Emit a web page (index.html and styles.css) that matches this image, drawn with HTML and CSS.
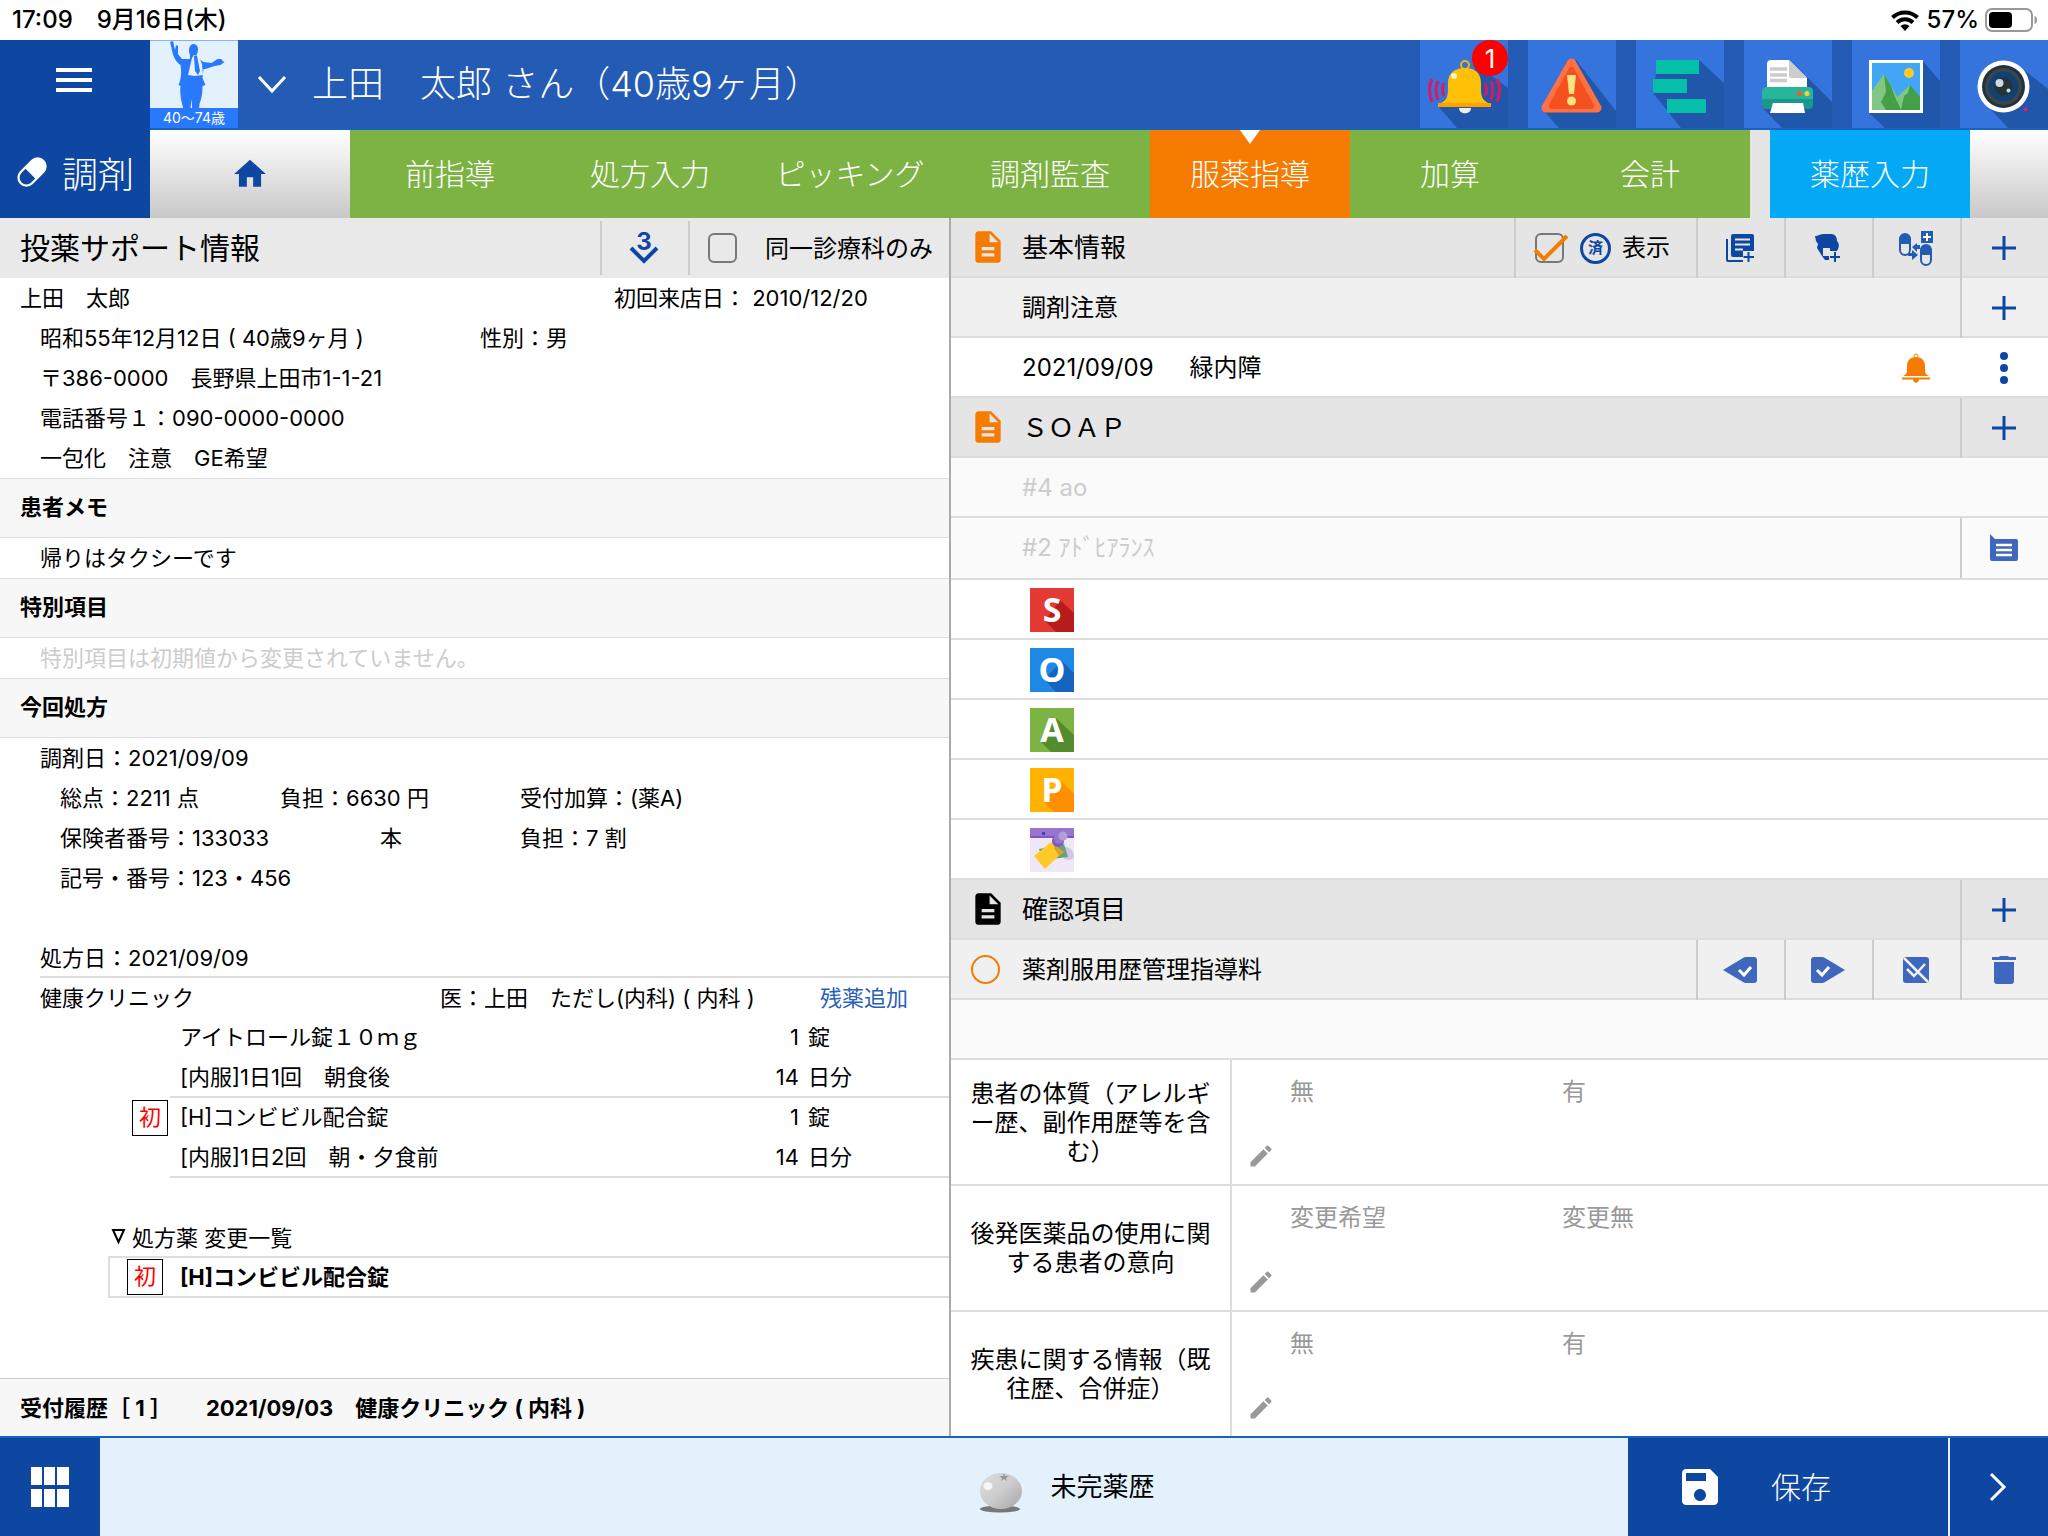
FILE: index.html
```html
<!DOCTYPE html>
<html lang="ja">
<head>
    <meta charset="UTF-8">
    <meta name="viewport" content="width=device-width, initial-scale=1.0">
    <title>服薬指導</title>
    <link rel="stylesheet" href="styles.css">
</head>
<body>
<svg class="symbols" width="0" height="0">
    <symbol id="plus" viewBox="0 0 24 24"><path d="M12 0v24M0 12h24" stroke="#0d47a1" stroke-width="3"/></symbol>
    <symbol id="doc" viewBox="0 0 24 24"><path d="M14 2H6c-1.100 0-2 .9-2 2v16c0 1.100.9 2 2 2h12c1.100 0 2-.9 2-2V8l-6-6zm2 16H8v-2h8v2zm0-4H8v-2h8v2zm-3-5V3.500L18.500 9H13z"/></symbol>
    <symbol id="pencil" viewBox="0 0 24 24"><path d="M3 17.250V21h3.750L17.810 9.940l-3.750-3.750L3 17.250zM20.710 7.040c.39-.39.39-1.020 0-1.410l-2.340-2.340c-.39-.39-1.020-.39-1.410 0l-1.830 1.830 3.750 3.750 1.830-1.830z"/></symbol>
</svg>

<div class="status-bar">
    <span class="time">17:09</span>
    <span class="date">9月16日(木)</span>
    <svg class="wifi" width="28" height="22" viewBox="0 0 28 22">
        <path d="M1.500 8.500a18 18 0 0 1 25 0M6 13.500a11.500 11.500 0 0 1 16 0" fill="none" stroke="#000" stroke-width="4"/>
        <path d="M9.500 17a6.500 6.500 0 0 1 9 0L14 22z"/>
    </svg>
    <span class="battery-text">57%</span>
    <svg width="53" height="24" viewBox="0 0 53 24">
        <rect x="1" y="1" width="46" height="22" rx="6" fill="#fff" stroke="#999" stroke-width="2"/>
        <rect x="4" y="4" width="23" height="16" rx="4"/>
        <path d="M49.500 8c3.500 1 3.500 7 0 8z" fill="#999"/>
    </svg>
</div>

<header class="header">
    <div class="side">
        <button class="menu" type="button" aria-label="メニュー"><span></span><span></span><span></span></button>
        <div class="mode">
            <svg width="34" height="34" viewBox="0 0 30 30">
                <g transform="rotate(-45 15 15)">
                    <rect x="1" y="8" width="28" height="14" rx="7" fill="none" stroke="#fff" stroke-width="2"/>
                    <path d="M13 8h9a7 7 0 0 1 0 14h-9z" fill="#fff"/>
                </g>
            </svg>
            調剤
        </div>
    </div>
    <div class="top">
        <div class="patient-bar">
            <div class="avatar">
                <svg width="88" height="67" viewBox="0 0 88 67">
                    <path d="M20 1l3-1 2 9 1-5 2 1 0 8 4 5 8 0v-4c-2-4-1-11 3.500-11s6 6 3 11l1 3 6 4 8 1 6-4 4 0 1 2 2 1-4 3-6 1-9 3-2 0-1 9 3 7-3 1c0 8-1 12-3 18l-1 10 3 4h-6l-3-5-1-14-2 19-7 0 2-6c-3-9-5-18-4-26l-2-1c3-7 3-13 2-20-5-3-8-10-9-17z" fill="#2979ff"/>
                    <path d="M42 17l2-3 5 2 3 7 1 11-8 1-7-1z" fill="#e3f1fc"/>
                    <path d="M44 15h3l3 15-2 4-3-4z" fill="#2979ff"/>
                </svg>
                <span>40～74歳</span>
            </div>
            <button class="expand" type="button" aria-label="患者情報を開く">
                <svg width="30" height="18" viewBox="0 0 30 18"><path d="M2 1l13 14L28 1" fill="none" stroke="#fff" stroke-width="3"/></svg>
            </button>
            <h1>上田　太郎 さん（40歳9ヶ月）</h1>
            <div class="tools">
                <button type="button" aria-label="通知">
                    <svg width="88" height="88" viewBox="0 0 88 88">
                        <path d="M18 66L37 88H88V48L58 26z" fill="#2057ab"/>
                        <path d="M12 39q-5 10 0 23M18 41q-4 9 0 19M24 43q-3 7 0 13M77 39q5 10 0 23M71 41q4 9 0 19M65 43q3 7 0 13" fill="none" stroke="#d81b60" stroke-width="3"/>
                        <circle cx="45" cy="25" r="4" fill="none" stroke="#ffb300" stroke-width="2"/>
                        <path d="M18 64c7-2 10-6 10-14v-7c0-10 7-15 17-15s16 5 16 15v7c0 8 3 12 10 14z" fill="#ffc107"/>
                        <path d="M18 63h53v4H18z" fill="#ffa000"/>
                        <path d="M39 68h12c0 7-12 7-12 0z" fill="#eee"/>
                        <circle cx="34" cy="36" r="3" fill="#fff3c4"/>
                    </svg>
                    <span class="badge">1</span>
                </button>
                <button type="button" aria-label="警告">
                    <svg width="88" height="88" viewBox="0 0 88 88">
                        <path d="M15 70L31 88H88V71L48 20z" fill="#2057ab"/>
                        <path d="M43.500 23L18 68h51z" fill="#ff7043" stroke="#ff7043" stroke-width="9" stroke-linejoin="round"/>
                        <path d="M43.500 30L24 66h39z" fill="#f4511e" stroke="#f4511e" stroke-width="6" stroke-linejoin="round"/>
                        <path d="M39 35h9l-2 19h-5z" fill="#ffe082"/>
                        <circle cx="43.500" cy="61" r="4.500" fill="#ffe082"/>
                    </svg>
                </button>
                <button type="button" aria-label="タイムライン">
                    <svg width="88" height="88" viewBox="0 0 88 88">
                        <path d="M17 53L45 88H88V43L63 20 20 33z" fill="#2057ab"/>
                        <path d="M20 20h43v14H20zM17 39h34v14H17zM31 59h39v14H31z" fill="#05c0a8"/>
                    </svg>
                </button>
                <button type="button" aria-label="印刷">
                    <svg width="88" height="88" viewBox="0 0 88 88">
                        <path d="M18 67L38 88H88V62L63 37z" fill="#2057ab"/>
                        <rect x="18" y="50" width="51" height="19" rx="4" fill="#1b978b"/>
                        <path d="M23 24q0-4 4-4h18l18 18v12H23z" fill="#fff"/>
                        <path d="M45 20l18 18H47q-2 0-2-2z" fill="#ccc"/>
                        <path d="M26 29h17M26 35h17M26 40.500h17" stroke="#ccc" stroke-width="3.500"/>
                        <path d="M18 51q0-4 5-4h41q5 0 5 4v8H18z" fill="#26b69b"/>
                        <circle cx="55.500" cy="53.500" r="2.500" fill="#ff5722"/>
                        <circle cx="63" cy="53.500" r="2.500" fill="#fdcf30"/>
                        <path d="M29 63h30l2 10H26z" fill="#fff"/>
                    </svg>
                </button>
                <button type="button" aria-label="画像">
                    <svg width="88" height="88" viewBox="0 0 88 88">
                        <path d="M17 73L33 88H88V41L70 20z" fill="#2057ab"/>
                        <path d="M17 20h54v53H17z" fill="#fff"/>
                        <path d="M20 23h48v47H20z" fill="#42a5f5"/>
                        <path d="M20 51l12-17 13 22v14H20z" fill="#81c784"/>
                        <path d="M32 34l7 12 6 16 13-17 10 12v13H34l-5-8 5-10z" fill="#43a047"/>
                        <path d="M58 45l-2 8-4 3-3 14-5-12z" fill="#81c784"/>
                        <circle cx="57" cy="33" r="5" fill="#ffca28"/>
                    </svg>
                </button>
                <button type="button" aria-label="カメラ">
                    <svg width="88" height="88" viewBox="0 0 88 88">
                        <path d="M24 62L48 88H88V49L64 30z" fill="#2057ab"/>
                        <circle cx="43.500" cy="46.500" r="26" fill="#fff"/>
                        <circle cx="43.500" cy="46.500" r="21.500" fill="#263238"/>
                        <circle cx="43.500" cy="46.500" r="18.500" fill="#37474f"/>
                        <circle cx="43.500" cy="46.500" r="15" fill="#12406f"/>
                        <circle cx="43.500" cy="46.500" r="9" fill="#263238"/>
                        <circle cx="39.500" cy="43" r="4" fill="#cfd8dc"/>
                        <circle cx="48.500" cy="50.500" r="2" fill="#cfd8dc"/>
                        <circle cx="65.500" cy="69.500" r="2" fill="#e91e63"/>
                    </svg>
                </button>
            </div>
        </div>
        <nav class="tabs">
            <a class="home" href="#" aria-label="ホーム"><svg width="38" height="38" viewBox="0 0 24 24"><path d="M10 20v-6h4v6h5v-8h3L12 3 2 12h3v8z" fill="#0d47a1"/></svg></a>
            <a href="#">前指導</a>
            <a href="#">処方入力</a>
            <a href="#">ピッキング</a>
            <a href="#">調剤監査</a>
            <a class="active" href="#">服薬指導</a>
            <a href="#">加算</a>
            <a href="#">会計</a>
            <a class="record" href="#">薬歴入力</a>
            <span class="tabs-end"></span>
        </nav>
    </div>
</header>

<main class="main">
    <section class="support">
        <div class="support-header">
            <h2>投薬サポート情報</h2>
            <button class="count" type="button" aria-label="3件">
                <svg width="30" height="32" viewBox="0 0 30 32">
                    <text x="15" y="18" text-anchor="middle" fill="#0d47a1">3</text>
                    <path d="M2 16l13 13 13-13" fill="none" stroke="#0d47a1" stroke-width="4"/>
                </svg>
            </button>
            <label class="same-dept"><input class="check" type="checkbox"><span>同一診療科のみ</span></label>
        </div>

        <div class="row row-name"><span>上田　太郎</span><span>初回来店日： 2010/12/20</span></div>
        <div class="row indent row-birth"><span>昭和55年12月12日 ( 40歳9ヶ月 )</span><span>性別：男</span></div>
        <div class="row indent">〒386-0000　長野県上田市1-1-21</div>
        <div class="row indent">電話番号１：090-0000-0000</div>
        <div class="row indent">一包化　注意　GE希望</div>

        <h3>患者メモ</h3>
        <div class="row indent">帰りはタクシーです</div>

        <h3>特別項目</h3>
        <div class="row indent muted">特別項目は初期値から変更されていません。</div>

        <h3>今回処方</h3>
        <div class="row indent">調剤日：2021/09/09</div>
        <div class="row indent-2 row-points"><span>総点：2211 点</span><span>負担：6630 円</span><span>受付加算：(薬A)</span></div>
        <div class="row indent-2 row-insurance"><span>保険者番号：133033</span><span>本</span><span>負担：7 割</span></div>
        <div class="row indent-2">記号・番号：123・456</div>
        <div class="row"></div>
        <div class="row row-date">処方日：2021/09/09</div>
        <div class="row indent row-clinic"><span>健康クリニック</span><span>医：上田　ただし(内科) ( 内科 )</span><a href="#">残薬追加</a></div>

        <table class="drugs">
            <tr><td></td><td>アイトロール錠１０ｍｇ</td><td>1</td><td>錠</td></tr>
            <tr class="last"><td></td><td>[内服]1日1回　朝食後</td><td>14</td><td>日分</td></tr>
            <tr><td><span class="first">初</span></td><td>[H]コンビビル配合錠</td><td>1</td><td>錠</td></tr>
            <tr class="last"><td></td><td>[内服]1日2回　朝・夕食前</td><td>14</td><td>日分</td></tr>
        </table>

        <div class="row"></div>
        <div class="row row-changes"><svg width="15" height="16" viewBox="0 0 15 16"><path d="M2 2h11L7.500 14z" fill="none" stroke="#000" stroke-width="2"/></svg>処方薬 変更一覧</div>
        <div class="changed"><span class="first">初</span><span>[H]コンビビル配合錠</span></div>

        <div class="history"><span>受付履歴［ 1 ］</span><span>2021/09/03　健康クリニック ( 内科 )</span></div>
    </section>

    <section class="record-panel">
        <div class="bar dark">
            <svg class="bar-icon orange" width="38" height="38"><use href="#doc"/></svg>
            <h2>基本情報</h2>
            <label class="show-done">
                <span class="check-wrap">
                    <input class="check" type="checkbox" checked>
                    <svg width="36" height="32" viewBox="0 0 36 32"><path d="M2 17l9 9L34 3" fill="none" stroke="#f57c00" stroke-width="4"/></svg>
                </span>
                <span class="done">済</span>
                表示
            </label>
            <button class="cell" type="button" aria-label="複製して追加">
                <svg width="28" height="30" viewBox="0 0 28 28" fill="#0d47a1">
                    <path d="M0 5h2v21h15v2H2q-2 0-2-2z"/>
                    <path d="M7 0h19q2 0 2 2v15H17v6H7q-2 0-2-2V2q0-2 2-2z"/>
                    <path d="M9 5.500h15M9 10.500h15M9 15.500h8" stroke="#e5e5e5" stroke-width="2"/>
                    <path d="M22.500 18v10M17.500 23h10.500" stroke="#0d47a1" stroke-width="2"/>
                </svg>
            </button>
            <button class="cell" type="button" aria-label="患者コメント追加">
                <svg width="26" height="28" viewBox="0 0 26 28" fill="#0d47a1">
                    <path d="M0 2c3 0 5-2 9-2h7c4 0 6 3 6 7 3 3 2 7 0 10h-7v-3H7v8l-5-8 1-4-2-3z"/>
                    <path d="M7 14v8l3 4h4v-4H8v-8z"/>
                    <path d="M20 18v10M15 23h10" stroke="#0d47a1" stroke-width="2"/>
                </svg>
            </button>
            <button class="cell" type="button" aria-label="薬剤変更追加">
                <svg width="35" height="35" viewBox="0 0 35 35" fill="#235bb5">
                    <path d="M0 13V9a6 6 0 0 1 12 0v4z"/>
                    <path d="M21 24v-4a6 6 0 0 1 12 0v4z"/>
                    <rect x="1" y="3" width="10" height="21" rx="5" fill="none" stroke="#235bb5" stroke-width="2"/>
                    <rect x="22" y="14" width="10" height="20" rx="5" fill="none" stroke="#235bb5" stroke-width="2"/>
                    <path d="M9 22h4v-3l6 5-6 5v-4H9zM21 14h-3v-2l-5 4 5 5v-3h3z"/>
                    <path d="M22 0h12v12H22z"/>
                    <path d="M28 2v8M24 6h8" stroke="#fff" stroke-width="2"/>
                </svg>
            </button>
            <button class="cell" type="button" aria-label="基本情報を追加"><svg width="24" height="24"><use href="#plus"/></svg></button>
        </div>
        <div class="bar mid">
            <h3>調剤注意</h3>
            <button class="cell" type="button" aria-label="調剤注意を追加"><svg width="24" height="24"><use href="#plus"/></svg></button>
        </div>
        <div class="bar">
            <p><span>2021/09/09</span><span>緑内障</span></p>
            <button class="cell plain" type="button" aria-label="アラート">
                <svg width="28" height="30" viewBox="0 0 28 30" fill="#f57c00">
                    <circle cx="14" cy="3" r="2" fill="none" stroke="#f57c00"/>
                    <path d="M1 23c3-1 4-3 4-6v-4c0-6 4-9 9-9s9 3 9 9v4c0 3 1 5 4 6zM0 24.500h28v2H0zM11 26h6c0 5-6 5-6 0z"/>
                </svg>
            </button>
            <button class="cell plain" type="button" aria-label="その他">
                <svg width="8" height="32" viewBox="0 0 8 32" fill="#0d47a1"><circle cx="4" cy="4" r="4"/><circle cx="4" cy="16" r="4"/><circle cx="4" cy="28" r="4"/></svg>
            </button>
        </div>
        <div class="bar dark">
            <svg class="bar-icon orange" width="38" height="38"><use href="#doc"/></svg>
            <h2>ＳＯＡＰ</h2>
            <button class="cell" type="button" aria-label="SOAPを追加"><svg width="24" height="24"><use href="#plus"/></svg></button>
        </div>
        <div class="bar light"><p class="hint">#4 ao</p></div>
        <div class="bar light tall">
            <p class="hint">#2 ｱﾄﾞﾋｱﾗﾝｽ</p>
            <button class="cell" type="button" aria-label="コメント">
                <svg width="28" height="28" viewBox="0 0 28 28"><path d="M0 0l5 5h21q2 0 2 2v18q0 2-2 2H2q-2 0-2-2z" fill="#3f67be"/><path d="M6 11h16M6 16h16M6 21h16" stroke="#fff" stroke-width="2.500"/></svg>
            </button>
        </div>
        <label class="soap">
            <svg width="44" height="44" viewBox="0 0 44 44"><path d="M0 0h44v44H0z" fill="#e53935"/><path d="M30 12l14 13v19H26L15 33z" fill="#b71c1c"/><text x="22" y="34" text-anchor="middle">S</text></svg>
            <input type="text" aria-label="S">
        </label>
        <label class="soap">
            <svg width="44" height="44" viewBox="0 0 44 44"><path d="M0 0h44v44H0z" fill="#1e88e5"/><path d="M32 13l12 12v19H26L14 31z" fill="#1565c0"/><text x="22" y="34" text-anchor="middle">O</text></svg>
            <input type="text" aria-label="O">
        </label>
        <label class="soap">
            <svg width="44" height="44" viewBox="0 0 44 44"><path d="M0 0h44v44H0z" fill="#7cb342"/><path d="M26 10l18 17v17H21L11 34z" fill="#558b2f"/><text x="22" y="34" text-anchor="middle">A</text></svg>
            <input type="text" aria-label="A">
        </label>
        <label class="soap">
            <svg width="44" height="44" viewBox="0 0 44 44"><path d="M0 0h44v44H0z" fill="#ffb300"/><path d="M31 13l13 13v18H24L14 34z" fill="#ff8f00"/><text x="22" y="34" text-anchor="middle">P</text></svg>
            <input type="text" aria-label="P">
        </label>
        <label class="soap">
            <svg width="44" height="44" viewBox="0 0 44 44">
                <path d="M0 0h44v44H0z" fill="#ede7f6"/>
                <path d="M0 0h44v9H0z" fill="#9575cd"/>
                <path d="M0 8h44v2H0z" fill="#7e57c2"/>
                <path d="M12 4h3v3h-3z" fill="#5e35b1"/>
                <path d="M34 19c6-1 10 5 10 9 0 3-5 5-10 3z" fill="#d1c4e9"/>
                <path d="M9 21l25-5 4 13-25 3z" fill="#6a9f78"/>
                <path d="M21 14l12 10-18 17L4 28z" fill="#ffca28"/>
                <path d="M25 17l9 7-5 4-5-8z" fill="#d4a52a"/>
                <circle cx="28" cy="13" r="6" fill="#7e57c2"/>
                <circle cx="29" cy="11" r="5" fill="#9575cd"/>
                <circle cx="33" cy="8" r="4.500" fill="#b39ddb"/>
            </svg>
            <input type="text" aria-label="メモ">
        </label>
        <div class="bar dark">
            <svg class="bar-icon" width="38" height="38"><use href="#doc"/></svg>
            <h2>確認項目</h2>
            <button class="cell" type="button" aria-label="確認項目を追加"><svg width="24" height="24"><use href="#plus"/></svg></button>
        </div>
        <div class="bar mid">
            <span class="ring"></span>
            <h3>薬剤服用歴管理指導料</h3>
            <button class="cell" type="button" aria-label="前回をチェック">
                <svg width="34" height="26" viewBox="0 0 34 26"><path d="M0 13L20 1q1-1 3-1h8q3 0 3 3v20q0 3-3 3h-8q-2 0-3-1z" fill="#3f67be"/><path d="M16 13l5 5 7-8" fill="none" stroke="#fff" stroke-width="3"/></svg>
            </button>
            <button class="cell" type="button" aria-label="次回をチェック">
                <svg width="34" height="26" viewBox="0 0 34 26"><path d="M34 13L14 1q-1-1-3-1H3Q0 0 0 3v20q0 3 3 3h8q2 0 3-1z" fill="#3f67be"/><path d="M6 13l5 5 7-8" fill="none" stroke="#fff" stroke-width="3"/></svg>
            </button>
            <button class="cell" type="button" aria-label="チェック解除">
                <svg width="26" height="26" viewBox="0 0 26 26"><rect width="26" height="26" rx="3" fill="#3f67be"/><path d="M4 12l7 7L22 7M1 1l24 24" fill="none" stroke="#f0f0f0" stroke-width="2.500"/></svg>
            </button>
            <button class="cell" type="button" aria-label="削除">
                <svg width="24" height="28" viewBox="0 0 24 28" fill="#3f67be"><path d="M0 1h7l1-1h8l1 1h7v3H0zM2 6h20v19q0 3-3 3H5q-3 0-3-3z"/></svg>
            </button>
        </div>
        <div class="bar light"></div>
        <table class="checks">
            <tr>
                <th scope="row">患者の体質（アレルギー歴、副作用歴等を含む）</th>
                <td>
                    <div class="options"><button type="button">無</button><button type="button">有</button></div>
                    <button class="edit" type="button" aria-label="編集"><svg width="28" height="28"><use href="#pencil"/></svg></button>
                </td>
            </tr>
            <tr>
                <th scope="row">後発医薬品の使用に関する患者の意向</th>
                <td>
                    <div class="options"><button type="button">変更希望</button><button type="button">変更無</button></div>
                    <button class="edit" type="button" aria-label="編集"><svg width="28" height="28"><use href="#pencil"/></svg></button>
                </td>
            </tr>
            <tr>
                <th scope="row">疾患に関する情報（既往歴、合併症）</th>
                <td>
                    <div class="options"><button type="button">無</button><button type="button">有</button></div>
                    <button class="edit" type="button" aria-label="編集"><svg width="28" height="28"><use href="#pencil"/></svg></button>
                </td>
            </tr>
        </table>
    </section>
</main>

<footer class="footer">
    <button class="apps" type="button" aria-label="アプリ一覧">
        <svg width="38" height="40" viewBox="0 0 38 40" fill="#fff"><path d="M0 0h11v18H0zM13 0h11v18H13zM26 0h12v18H26zM0 22h11v18H0zM13 22h11v18H13zM26 22h12v18H26z"/></svg>
    </button>
    <div class="state">
        <svg width="44" height="52" viewBox="0 -12 44 52">
            <defs>
                <linearGradient id="ball" x1="0" y1="0" x2="1" y2="1"><stop offset="0" stop-color="#dedede"/><stop offset=".5" stop-color="#cdcdcd"/><stop offset="1" stop-color="#a5a5a5"/></linearGradient>
            </defs>
            <ellipse cx="21" cy="36" rx="20" ry="3.500" fill="#777"/>
            <ellipse cx="22" cy="18" rx="21" ry="18" fill="url(#ball)"/>
            <ellipse cx="9" cy="13" rx="4.500" ry="4" fill="#f7f7f7"/>
            <path d="M25 0l1 3 4 0-3 2 1 3-3-2-3 2 1-3-3-2 4 0z" fill="#999"/>
        </svg>
        <span>未完薬歴</span>
    </div>
    <button class="save" type="button">
        <svg width="48" height="48" viewBox="0 0 24 24"><path d="M17 3H5c-1.110 0-2 .9-2 2v14c0 1.100.89 2 2 2h14c1.100 0 2-.9 2-2V7l-4-4zm-5 16c-1.660 0-3-1.340-3-3s1.340-3 3-3 3 1.340 3 3-1.340 3-3 3zm3-10H5V5h10v4z" fill="#fff"/></svg>
        <span>保存</span>
    </button>
    <button class="next" type="button" aria-label="次へ">
        <svg width="18" height="30" viewBox="0 0 18 30"><path d="M2 2l13 13L2 28" fill="none" stroke="#fff" stroke-width="3"/></svg>
    </button>
</footer>
</body>
</html>
```
FILE: styles.css
```css
* {
    box-sizing: border-box;
}

body {
    margin: 0;
    min-height: 100vh;
    display: flex;
    flex-direction: column;
    font-family: Inter, "Noto Sans CJK JP", sans-serif;
    font-size: 22px;
    color: #000;
    background: #fff;
}

h1, h2, h3, p {
    margin: 0;
    font-weight: 400;
}

button {
    padding: 0;
    border: 0;
    background: none;
    font: inherit;
    color: inherit;
    display: flex;
    align-items: center;
    justify-content: center;
}

a {
    text-decoration: none;
}

svg {
    display: block;
    flex: none;
    overflow: visible;
}

.symbols {
    position: absolute;
}

/* status bar */
.status-bar {
    height: 40px;
    padding: 0 10px 0 12px;
    display: flex;
    align-items: center;
    font-size: 24px;
    line-height: 40px;
    font-weight: 500;
}

.date {
    margin-left: 24px;
}

.wifi {
    margin-left: auto;
}

.battery-text {
    margin: 0 6px 0 8px;
}

/* header */
.header {
    display: flex;
    color: #fff;
    font-weight: 300;
}

.side {
    width: 150px;
    height: 178px;
    background: #0d47a1;
}

.menu {
    width: 148px;
    height: 80px;
    flex-direction: column;
    gap: 6px;
}

.menu span {
    width: 36px;
    height: 4px;
    background: #fff;
}

.mode {
    height: 98px;
    padding: 6px 0 0 15px;
    display: flex;
    align-items: center;
    gap: 13px;
    font-size: 36px;
    white-space: nowrap;
}

.top {
    flex: 1;
}

.patient-bar {
    height: 90px;
    display: flex;
    align-items: flex-start;
    background: #235bb5;
    border-bottom: 2px solid #1565c0;
}

.avatar {
    width: 88px;
    height: 88px;
    background: #e3f1fc;
    border-top: 1px solid #82b1ff;
}

.avatar span {
    display: block;
    height: 20px;
    line-height: 20px;
    font-size: 14px;
    font-weight: 400;
    text-align: center;
    background: #2979ff;
}

.expand {
    width: 68px;
    height: 90px;
}

.patient-bar h1 {
    font-size: 36px;
    font-weight: 300;
    line-height: 88px;
    margin-left: 6px;
}

.tools {
    margin-left: auto;
    display: flex;
    gap: 20px;
}

.tools button {
    position: relative;
    background: #3574dc;
}

.tools svg {
    overflow: hidden;
}

.badge {
    position: absolute;
    top: 0;
    right: 0;
    width: 36px;
    height: 36px;
    border-radius: 50%;
    background: #f00;
    color: #fff;
    font-size: 26px;
    font-weight: 400;
    line-height: 38px;
}

.tabs {
    display: flex;
    height: 88px;
    background: #e4e4e4;
}

.tabs a {
    flex: 200 1 0;
    padding-bottom: 4px;
    display: flex;
    align-items: center;
    justify-content: center;
    font-size: 30px;
    color: #fff;
    background: #7cb342;
}

.tabs .home, .tabs-end {
    padding: 0;
    background: linear-gradient(#fff, #c8c8c8);
}

.tabs .active {
    position: relative;
    background: #f57c00;
}

.tabs .active::before {
    content: "";
    position: absolute;
    top: 0;
    left: 50%;
    margin-left: -10px;
    border: 10px solid transparent;
    border-top: 14px solid #fff;
    border-bottom: 0;
}

.tabs .record {
    margin-left: 20px;
    background: #03a9f4;
}

.tabs-end {
    flex: 78 1 0;
}

/* main */
.main {
    flex: 1;
    display: grid;
    grid-template-columns: 949fr 1099fr;
}

.support {
    display: flex;
    flex-direction: column;
}

.support-header {
    height: 60px;
    padding-left: 20px;
    display: flex;
    align-items: center;
    background: #e9e9e9;
}

.support-header h2 {
    padding-bottom: 4px;
    font-size: 30px;
}

.support-header .count {
    margin-left: auto;
    width: 88px;
    height: 54px;
    padding-right: 2px;
    border-left: 2px solid #ccc;
}

.count text {
    font-size: 24px;
    font-weight: 700;
}

.same-dept {
    height: 54px;
    padding: 0 16px 0 18px;
    border-left: 2px solid #ccc;
    display: flex;
    align-items: center;
    gap: 28px;
    font-size: 24px;
}

.same-dept span {
    padding-bottom: 4px;
}

.check {
    appearance: none;
    width: 29px;
    height: 30px;
    margin: 0;
    border: 2px solid #777;
    border-radius: 6px;
}

.row {
    height: 40px;
    padding: 0 0 4px 20px;
    display: grid;
    align-items: center;
    white-space: nowrap;
}

.indent {
    padding-left: 40px;
}

.indent-2 {
    padding-left: 60px;
}

.row-name {
    grid-template-columns: 594px 1fr;
}

.row-birth {
    grid-template-columns: 440px 1fr;
}

.row-points {
    grid-template-columns: 220px 240px 1fr;
}

.row-insurance {
    grid-template-columns: 320px 140px 1fr;
}

.row-clinic {
    grid-template-columns: 400px 380px 1fr;
}

.row-clinic a {
    color: #2a5fba;
}

.row-date {
    margin-left: 40px;
    padding: 0 0 2px;
    border-bottom: 2px solid #ddd;
}

.muted {
    color: #ccc;
}

.support h3 {
    height: 60px;
    padding-left: 20px;
    font-size: 22px;
    font-weight: 700;
    line-height: 56px;
    background: #f7f7f7;
    border-top: 1px solid #ddd;
    border-bottom: 1px solid #ddd;
}

.drugs {
    margin-left: 128px;
    border-collapse: separate;
    border-spacing: 0;
    table-layout: fixed;
}

.drugs td {
    height: 40px;
    padding: 0;
    line-height: 38px;
    white-space: nowrap;
    vertical-align: top;
}

.drugs td:nth-child(1) {
    width: 42px;
}

.drugs td:nth-child(2) {
    padding-left: 10px;
}

.drugs td:nth-child(3) {
    width: 120px;
    text-align: right;
}

.drugs td:nth-child(4) {
    width: 150px;
    padding-left: 9px;
}

.drugs .last td:not(:first-child) {
    border-bottom: 2px solid #ddd;
}

.drugs .first {
    margin: 2px 0 0 4px;
}

.first {
    display: block;
    width: 36px;
    height: 36px;
    border: 1px solid #000;
    color: #f00;
    font-weight: 400;
    line-height: 32px;
    text-align: center;
}

.row-changes {
    padding-left: 111px;
    grid-template-columns: 15px 1fr;
    gap: 6px;
}

.changed {
    height: 42px;
    margin: -2px 0 0 108px;
    padding-left: 17px;
    display: flex;
    align-items: center;
    gap: 17px;
    font-weight: 700;
    line-height: 36px;
    border: 2px solid #ddd;
    border-right: 0;
}

.history {
    margin-top: auto;
    height: 58px;
    padding: 0 0 4px 20px;
    display: flex;
    align-items: center;
    gap: 34px;
    font-weight: 700;
    background: #f7f7f7;
    border-top: 1px solid #ccc;
    white-space: nowrap;
}

.record-panel {
    border-left: 2px solid #aaa;
}

.bar {
    height: 60px;
    display: flex;
    border-bottom: 2px solid #ddd;
    padding-left: 71px;
    font-size: 24px;
    line-height: 60px;
}

.bar h2 {
    font-size: 26px;
}

.bar h3 {
    font-size: 24px;
}

.bar h2, .bar h3, .bar p {
    flex: 1;
}

.bar p {
    display: flex;
    gap: 36px;
}

.dark {
    background: #e5e5e5;
}

.mid {
    background: #f0f0f0;
}

.light {
    background: #fafafa;
}

.tall {
    height: 62px;
}

.hint {
    color: #ccc;
}

.bar-icon {
    margin: 10px 15px 0 -53px;
}

.orange {
    fill: #f57c00;
}

.ring {
    width: 29px;
    height: 29px;
    margin: 15px 22px 0 -51px;
    border: 2px solid #f57c00;
    border-radius: 50%;
}

.cell {
    width: 88px;
    height: 60px;
    padding-right: 2px;
    border-left: 2px solid #ccc;
}

.plain {
    border-color: transparent;
}

.show-done {
    width: 182px;
    height: 60px;
    padding-left: 19px;
    display: flex;
    align-items: center;
    border-left: 2px solid #ccc;
}

.check-wrap {
    position: relative;
    display: flex;
}

.check-wrap svg {
    position: absolute;
    left: -2px;
    top: 0;
}

.done {
    width: 31px;
    height: 31px;
    margin: 0 11px 0 16px;
    border: 3px solid #0d47a1;
    border-radius: 50%;
    color: #0d47a1;
    font-size: 15px;
    font-weight: 700;
    line-height: 24px;
    text-align: center;
}

.soap {
    height: 60px;
    padding: 2px 0 0 79px;
    display: flex;
    align-items: center;
    gap: 16px;
    border-bottom: 2px solid #ddd;
}

.soap text {
    font-family: "Noto Sans", sans-serif;
    font-size: 34px;
    font-weight: 700;
    fill: #fff;
}

.soap input {
    flex: 1;
    height: 54px;
    border: 0;
    font: inherit;
    outline: 0;
}

.checks {
    width: 100%;
    border-collapse: separate;
    border-spacing: 0;
    font-size: 24px;
}

.checks th {
    width: 281px;
    padding: 0 19px;
    font-weight: 400;
    line-height: 29px;
    line-break: anywhere;
    border-right: 2px solid #ddd;
}

.checks td {
    padding: 18px 0 14px;
    color: #999;
}

.checks tr:not(:last-child) > * {
    border-bottom: 2px solid #ddd;
}

.options {
    padding-left: 58px;
    display: grid;
    grid-template-columns: 272px 1fr;
    justify-items: start;
    line-height: 28px;
}

.edit {
    margin: 36px 0 0 15px;
}

.edit svg {
    fill: #999;
}

/* footer */
.footer {
    height: 100px;
    display: flex;
    background: #e3f1fc;
    border-top: 2px solid #1565c0;
}

.apps {
    width: 100px;
    background: #0d47a1;
}

.state {
    flex: 1;
    padding-left: 42.9%;
    display: flex;
    align-items: center;
    gap: 28px;
    font-size: 26px;
}

.state span, .save span {
    padding-bottom: 5px;
}

.save {
    width: 320px;
    padding-left: 48px;
    justify-content: flex-start;
    gap: 47px;
    font-size: 30px;
    font-weight: 300;
    color: #fff;
    background: #0d47a1;
}

.next {
    width: 98px;
    padding-right: 2px;
    margin-left: 2px;
    background: #0d47a1;
}
```
